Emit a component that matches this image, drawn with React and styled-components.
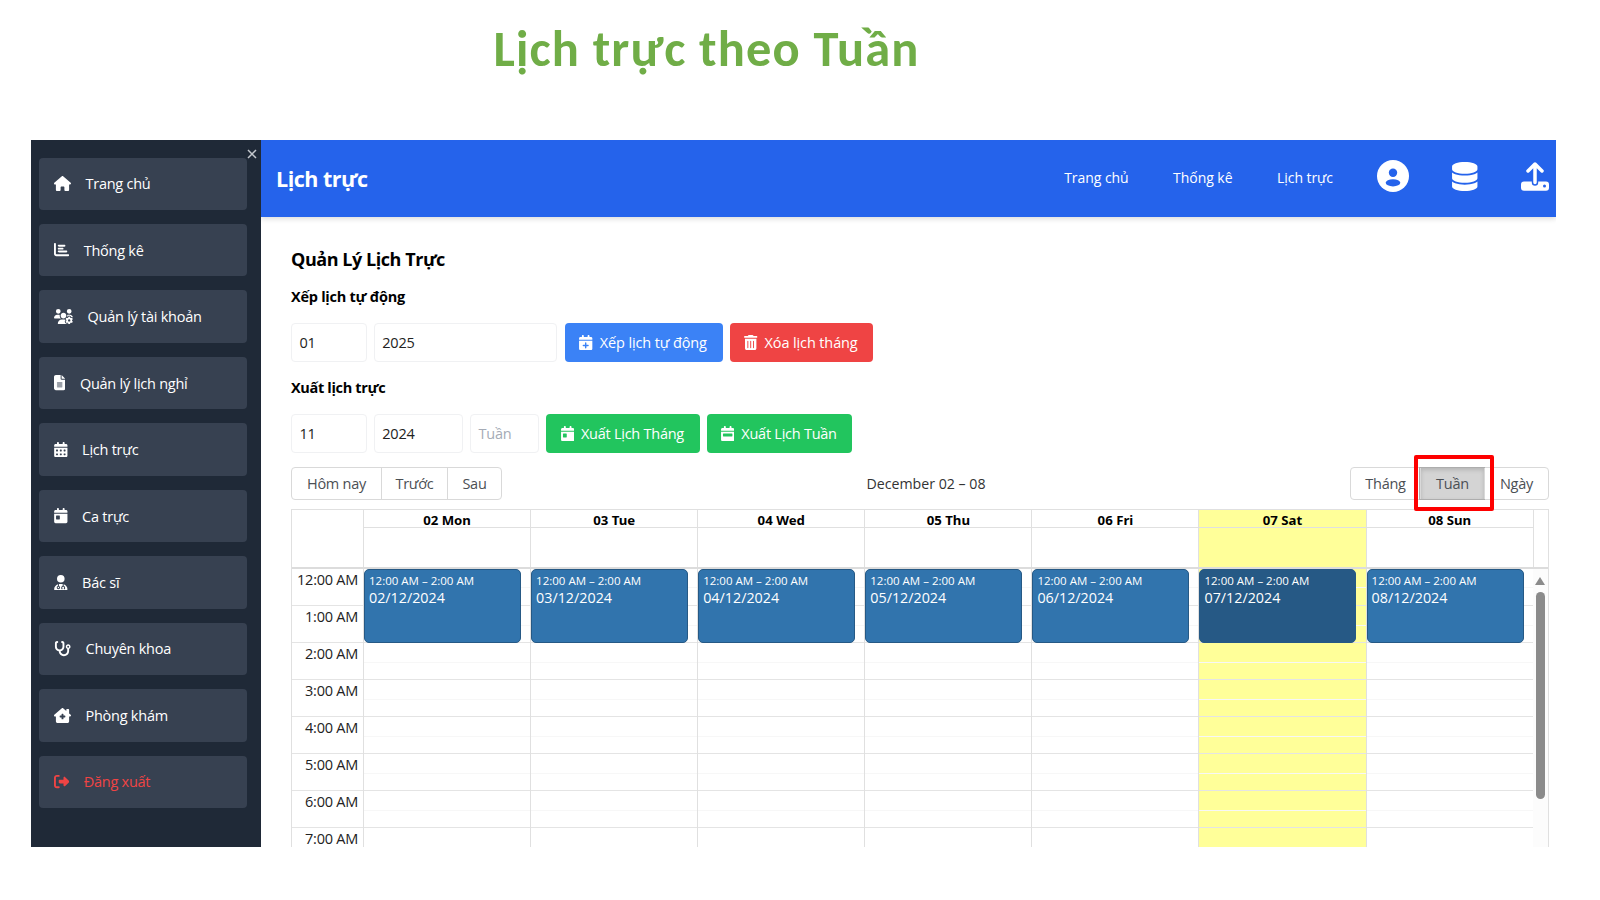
import React from "react";
import styled, { createGlobalStyle, css } from "styled-components";
import {
  FaHouse, FaChartBar, FaUsersGear, FaFileLines, FaCalendarDays, FaCalendarDay, FaUserDoctor,
  FaStethoscope, FaHouseChimneyMedical, FaRightFromBracket, FaCalendarPlus, FaTrashCan,
  FaCalendarWeek, FaDatabase,
} from "react-icons/fa6";

const GlobalStyle = createGlobalStyle`
  * { box-sizing: border-box; }
  body { margin: 0; background: #fff; font-family: "Open Sans", "Noto Sans", sans-serif; overflow: hidden; }
  button, input { font: inherit; }
`;

const Slide = styled.div`
  width: 1600px;
  height: 900px;
  padding-left: 31px;
  background: #fff;
  overflow: hidden;
`;
const SlideTitle = styled.h1`
  margin: 0;
  height: 139.5px;
  padding: 20px 0 0 462.5px;
  font: 700 50.5px/58px Carlito, Lato, sans-serif;
  letter-spacing: 1.15px;
  color: #70ad47;
  white-space: nowrap;
`;
const Window = styled.div`
  display: flex;
  width: 1525px;
  height: 707.5px;
  overflow: hidden;
`;

const Sidebar = styled.aside`
  position: relative;
  flex: 0 0 230px;
  padding: 18px 14px 0 8px;
  background: #1f2937;
  display: flex;
  flex-direction: column;
  gap: 14.3px;
`;
const Close = styled.svg`
  position: absolute;
  right: 4px;
  top: 9px;
  width: 10px;
  height: 10px;
  stroke: #c3c7cd;
  stroke-width: 1.5;
`;
const NavItem = styled.a`
  flex: 0 0 52.2px;
  display: flex;
  align-items: center;
  gap: 14.5px;
  padding: 0 15px;
  border-radius: 4px;
  background: #374151;
  color: ${(p) => (p.$danger ? "#ef4444" : "#fff")};
  font-size: 14.5px;
  svg { flex: none; height: 15.2px; width: ${(p) => p.$icon}px; }
`;
const Fit = styled.span`
  display: inline-block;
  white-space: nowrap;
  letter-spacing: ${(p) => p.$ls ?? -0.25}px;
`;

const Main = styled.main`
  flex: 1;
  min-width: 0;
  display: flex;
  flex-direction: column;
`;
const Header = styled.header`
  flex: 0 0 77.5px;
  display: flex;
  align-items: center;
  padding: 0 7px 0 15px;
  background: #2563eb;
  color: #fff;
  box-shadow: 0 2px 5px rgba(0, 0, 0, 0.14);
`;
const PageTitle = styled.div`
  flex: 1;
  font-size: 21.5px;
  font-weight: 700;
`;
const TopLinks = styled.nav`
  display: flex;
  align-items: center;
  gap: 44.5px;
  margin: 0 43.5px 1px 0;
  font-size: 14px;
`;
const TopIcons = styled.div`
  display: flex;
  align-items: center;
  gap: 43.5px;
  margin-bottom: 4px;
  svg { flex: none; }
`;
const DatabaseIcon = styled(FaDatabase)`
  width: 25.5px;
  height: 29px;
`;

const Content = styled.section`
  padding: 30px 7px 0 30px;
  display: flex;
  flex-direction: column;
`;
const H2 = styled.h2`
  margin: 0;
  font-size: 18px;
  line-height: 24px;
  font-weight: 700;
`;
const H3 = styled.h3`
  margin: ${(p) => p.$mt}px 0 ${(p) => p.$mb}px;
  font-size: 14.5px;
  line-height: 22px;
  font-weight: 700;
`;
const FormRow = styled.div`
  display: flex;
  gap: 7.3px;
  height: 38.6px;
`;
const Field = styled.div`
  width: ${(p) => p.$w}px;
  display: flex;
  align-items: center;
  padding-left: 7.5px;
  border: 1.5px solid #f0f1f3;
  border-radius: 4px;
  font-size: 14.5px;
  color: ${(p) => (p.$muted ? "#a5abb6" : "#222")};
`;
const Action = styled.button`
  width: ${(p) => p.$w}px;
  display: flex;
  align-items: center;
  justify-content: center;
  gap: 7px;
  padding: 0 1px 0 0;
  border: 0;
  border-radius: 4px;
  background: ${(p) => p.$bg};
  color: #fff;
  font-size: 14.5px;
  svg { height: 15.2px; width: 13.4px; }
`;

const Toolbar = styled.div`
  display: flex;
  justify-content: space-between;
  align-items: center;
  height: 33px;
  margin: 14.7px 0 8.7px;
  font-size: 14.5px;
`;
const Group = styled.div`
  display: flex;
  height: 33px;
  border: 1px solid #d9d9d9;
  border-radius: 4px;
`;
const GroupButton = styled.div`
  position: relative;
  width: ${(p) => p.$w}px;
  display: flex;
  align-items: center;
  justify-content: center;
  color: #4b4f54;
  & + & { border-left: 1px solid #d9d9d9; }
  ${(p) => p.$active && css`
    background: #d4d4d4;
    box-shadow: inset 0 2px 4px rgba(0, 0, 0, 0.15), 0 0 0 1px #adadad;
  `}
`;
const Highlight = styled.span`
  position: absolute;
  left: -7px;
  top: -13.5px;
  width: 80px;
  height: 56px;
  border: 4.5px solid #fe0000;
  border-radius: 2px;
`;
const RangeLabel = styled.div`
  color: #333;
  font-size: 14.2px;
`;

const Calendar = styled.div`
  width: 1258px;
  height: 340px;
  border: 1px solid #e0e0e0;
  border-bottom: 0;
`;
const CalHead = styled.div`
  display: flex;
  height: 59px;
  border-bottom: 2px solid #dcdcdc;
  padding-left: 71px;
`;
const HeadDay = styled.div`
  width: 167.1px;
  border-left: 1px solid #e0e0e0;
  background: ${(p) => (p.$today ? "#ffff99" : "#fff")};
  font: 700 13.2px/20px "Noto Sans", sans-serif;
  height: 57px;
  text-align: center;
  &::after { content: ""; display: block; margin-top: -2.5px; border-top: 1px solid #e0e0e0; }
`;
const HeadEnd = styled.div`
  border-left: 1px solid #e0e0e0;
`;
const CalBody = styled.div`
  display: flex;
  height: 281px;
  overflow: hidden;
`;
const Gutter = styled.div`
  width: 71px;
`;
const HourLabel = styled.div`
  height: 37.07px;
  padding-right: 5px;
  border-bottom: 1px solid #e4e4e4;
  text-align: right;
  font-size: 14.5px;
  line-height: 22px;
  color: #222;
  white-space: nowrap;
`;
const DayCol = styled.div`
  position: relative;
  width: 167.1px;
  border-left: 1px solid #e0e0e0;
  background: ${(p) => (p.$today ? "#ffff99" : "#fff")};
`;
const Slot = styled.div`
  height: 37.07px;
  border-bottom: 1px solid #e4e4e4;
  &::before { content: ""; display: block; height: 18.5px; border-bottom: 1px solid #f7f7f7; }
`;
const Event = styled.div`
  position: absolute;
  left: 0;
  top: 0;
  width: 157px;
  height: 74px;
  padding: 2px 4px;
  border: 1px solid #265985;
  border-radius: 5px;
  background: ${(p) => (p.$selected ? "#265985" : "#3174ad")};
  color: #fff;
`;
const EventTime = styled.div`
  font-size: 11.5px;
  line-height: 17px;
`;
const EventTitle = styled.div`
  font-size: 14.3px;
  line-height: 17px;
`;
const ScrollTrack = styled.div`
  flex: 1;
  display: flex;
  flex-direction: column;
  align-items: center;
  padding-top: 8px;
  background: #fcfcfc;
`;
const ScrollArrow = styled.div`
  border: 5px solid transparent;
  border-top: 0;
  border-bottom: 8px solid #8b8b8b;
`;
const ScrollThumb = styled.div`
  width: 9px;
  height: 207px;
  margin-top: 7px;
  border-radius: 5px;
  background: #8b8b8b;
`;

const menu = [
  [FaHouse, 17, "Trang chủ"],
  [FaChartBar, 15.2, "Thống kê"],
  [FaUsersGear, 19, "Quản lý tài khoản"],
  [FaFileLines, 11.4, "Quản lý lịch nghỉ"],
  [FaCalendarDays, 13.6, "Lịch trực"],
  [FaCalendarDay, 13.6, "Ca trực"],
  [FaUserDoctor, 13.6, "Bác sĩ"],
  [FaStethoscope, 17, "Chuyên khoa"],
  [FaHouseChimneyMedical, 17, "Phòng khám"],
  [FaRightFromBracket, 15.2, "Đăng xuất"],
];
const days = ["Mon", "Tue", "Wed", "Thu", "Fri", "Sat", "Sun"].map((name, i) => ({
  name, num: "0" + (i + 2), today: name === "Sat",
}));
const hours = ["12:00 AM", "1:00 AM", "2:00 AM", "3:00 AM", "4:00 AM", "5:00 AM", "6:00 AM", "7:00 AM"];

const UserCircle = () => (
  <svg width="32" height="32" viewBox="0 0 32 32">
    <circle cx="16" cy="16" r="16" fill="#fff" />
    <circle cx="16" cy="12.8" r="4.2" fill="#2563eb" />
    <ellipse cx="16" cy="22.8" rx="7.3" ry="3.6" fill="#2563eb" />
  </svg>
);
const UploadIcon = () => (
  <svg width="28" height="29" viewBox="0 0 28 29" fill="none">
    <rect x="0" y="19.5" width="28" height="9.3" rx="3" fill="#fff" />
    <path d="M14 20.5V10" stroke="#2563eb" strokeWidth="6.4" strokeLinecap="round" />
    <path d="M14 20.5V2M7 9l7-7 7 7" stroke="#fff" strokeWidth="3.5" strokeLinecap="round" strokeLinejoin="round" />
    <circle cx="23.5" cy="24" r="1.5" fill="#2563eb" />
  </svg>
);

export default function App() {
  return (
    <Slide>
      <GlobalStyle />
      <SlideTitle>Lịch trực theo Tuần</SlideTitle>
      <Window>
        <Sidebar>
          <Close viewBox="0 0 10 10"><path d="M1 1l8 8M9 1l-8 8" /></Close>
          {menu.map(([Icon, width, label], i) => (
            <NavItem key={label} $icon={width} $danger={i === 9}><Icon /><Fit>{label}</Fit></NavItem>
          ))}
        </Sidebar>
        <Main>
          <Header>
            <PageTitle><Fit $ls={-0.5}>Lịch trực</Fit></PageTitle>
            <TopLinks>
              <Fit $ls={-0.05}>Trang chủ</Fit>
              <Fit $ls={-0.05}>Thống kê</Fit>
              <Fit $ls={-0.05}>Lịch trực</Fit>
            </TopLinks>
            <TopIcons>
              <UserCircle />
              <DatabaseIcon />
              <UploadIcon />
            </TopIcons>
          </Header>
          <Content>
            <H2><Fit $ls={-0.45}>Quản Lý Lịch Trực</Fit></H2>
            <H3 $mt={15.3} $mb={15}><Fit>Xếp lịch tự động</Fit></H3>
            <FormRow>
              <Field $w={75.5}><Fit>01</Fit></Field>
              <Field $w={183.5}><Fit>2025</Fit></Field>
              <Action $w={158} $bg="#3b82f6"><FaCalendarPlus /><Fit $ls={-0.12}>Xếp lịch tự động</Fit></Action>
              <Action $w={143} $bg="#ef4444"><FaTrashCan /><Fit $ls={-0.12}>Xóa lịch tháng</Fit></Action>
            </FormRow>
            <H3 $mt={15.5} $mb={14.6}><Fit $ls={-0.33}>Xuất lịch trực</Fit></H3>
            <FormRow>
              <Field $w={75.5}><Fit>11</Fit></Field>
              <Field $w={89}><Fit>2024</Fit></Field>
              <Field $w={68.5} $muted><Fit>Tuần</Fit></Field>
              <Action $w={153.7} $bg="#22c55e"><FaCalendarDay /><Fit>Xuất Lịch Tháng</Fit></Action>
              <Action $w={145} $bg="#22c55e"><FaCalendarWeek /><Fit>Xuất Lịch Tuần</Fit></Action>
            </FormRow>
            <Toolbar>
              <Group>
                <GroupButton $w={89}><Fit>Hôm nay</Fit></GroupButton>
                <GroupButton $w={66}><Fit>Trước</Fit></GroupButton>
                <GroupButton $w={54}><Fit>Sau</Fit></GroupButton>
              </Group>
              <RangeLabel><Fit $ls={0}>December 02 – 08</Fit></RangeLabel>
              <Group>
                <GroupButton $w={69}><Fit>Tháng</Fit></GroupButton>
                <GroupButton $w={64} $active><Fit>Tuần</Fit><Highlight /></GroupButton>
                <GroupButton $w={64}><Fit>Ngày</Fit></GroupButton>
              </Group>
            </Toolbar>
            <Calendar>
              <CalHead>
                {days.map((d) => <HeadDay key={d.num} $today={d.today}>{d.num} {d.name}</HeadDay>)}
                <HeadEnd />
              </CalHead>
              <CalBody>
                <Gutter>{hours.map((h) => <HourLabel key={h}><Fit>{h}</Fit></HourLabel>)}</Gutter>
                {days.map((d) => (
                  <DayCol key={d.num} $today={d.today}>
                    {hours.map((h) => <Slot key={h} />)}
                    <Event $selected={d.today}>
                      <EventTime><Fit $ls={0}>12:00 AM – 2:00 AM</Fit></EventTime>
                      <EventTitle><Fit $ls={0}>{d.num}/12/2024</Fit></EventTitle>
                    </Event>
                  </DayCol>
                ))}
                <ScrollTrack><ScrollArrow /><ScrollThumb /></ScrollTrack>
              </CalBody>
            </Calendar>
          </Content>
        </Main>
      </Window>
    </Slide>
  );
}
